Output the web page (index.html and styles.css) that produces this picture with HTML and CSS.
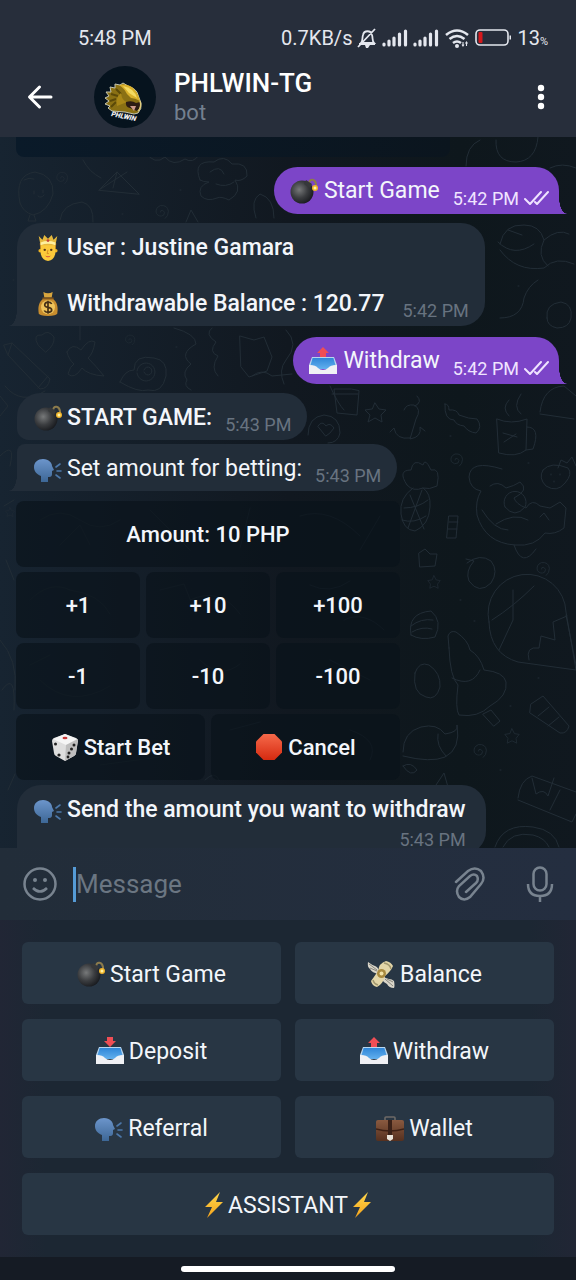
FILE: index.html
```html
<!DOCTYPE html>
<html lang="en">
<head>
<meta charset="utf-8">
<meta name="viewport" content="width=device-width, initial-scale=1">
<title>PHLWIN-TG</title>
<link rel="stylesheet" href="styles.css">
</head>
<body>
<svg class="sprites" aria-hidden="true">
  <defs>
    <radialGradient id="g-bomb" cx=".38" cy=".4" r=".65"><stop offset="0" stop-color="#77797a"/><stop offset=".55" stop-color="#3b3d40"/><stop offset="1" stop-color="#191b1f"/></radialGradient>
    <linearGradient id="g-tray" x1="0" y1="0" x2="0" y2="1"><stop offset="0" stop-color="#2f86d8"/><stop offset="1" stop-color="#62b0ee"/></linearGradient>
    <linearGradient id="g-head" x1="0" y1="0" x2="0" y2="1"><stop offset="0" stop-color="#6c95cb"/><stop offset="1" stop-color="#3d6796"/></linearGradient>
    <linearGradient id="g-stop" x1="0" y1="0" x2="0" y2="1"><stop offset="0" stop-color="#f5694a"/><stop offset="1" stop-color="#d62a10"/></linearGradient>
    <linearGradient id="g-case" x1="0" y1="0" x2="0" y2="1"><stop offset="0" stop-color="#8a5a40"/><stop offset="1" stop-color="#55301f"/></linearGradient>
    <linearGradient id="g-bolt" x1="0" y1="0" x2="0" y2="1"><stop offset="0" stop-color="#ffd84d"/><stop offset="1" stop-color="#f5a31a"/></linearGradient>
  </defs>
  <symbol id="bomb" viewBox="0 0 28 28">
    <path d="M19 6c1-5 6-4 7 1v3" fill="none" stroke="#8c7b4c" stroke-width="2"/>
    <circle cx="12" cy="15" r="11.500" fill="url(#g-bomb)"/>
    <path d="M16 3l6 4-2 4-6-4z" fill="#36383a"/>
    <circle cx="25" cy="11" r="3" fill="#f0b429"/><circle cx="25" cy="11" r="1.500" fill="#fff3a5"/>
  </symbol>
  <symbol id="tray-out" viewBox="0 0 28 28">
    <path d="M14 0l6 6h-3v4h-6V6H8z" fill="#ef4e55"/>
    <path d="M3 10h22l3 8v3H0v-3z" fill="#b9d6ee"/><path d="M3.600 11h20.800l2 7q-5 1-7 4h-10.800q-2-3-7-4z" fill="url(#g-tray)"/>
    <path d="M0 18q7 0 9 3 2 2 5 2t5-2q2-3 9-3v9H0z" fill="#f0f1f5"/>
  </symbol>
  <symbol id="tray-in" viewBox="0 0 28 28">
    <path d="M11 0h6v4h3l-6 6-6-6h3z" fill="#ef4e55"/>
    <path d="M3 10h22l3 8v3H0v-3z" fill="#b9d6ee"/><path d="M3.600 11h20.800l2 7q-5 1-7 4h-10.800q-2-3-7-4z" fill="url(#g-tray)"/>
    <path d="M0 18q7 0 9 3 2 2 5 2t5-2q2-3 9-3v9H0z" fill="#f0f1f5"/>
  </symbol>
  <symbol id="speak" viewBox="0 0 28 28">
    <path d="M7 27v-6C2 19 0 16 0 12 0 7 4 4 9 4c6 0 9 4 9 7l2 4-2 1v3c0 3-2 3-4 3v5z" fill="url(#g-head)"/>
    <path d="M22 12l4-3M23 16h4M22 20l4 3" stroke="#4c78aa" stroke-width="1.600" stroke-linecap="round"/>
  </symbol>
  <symbol id="prince" viewBox="0 0 28 28">
    <path d="M5 9q9-6 18 0l-1 9H6z" fill="#8f5a1a"/><circle cx="5.500" cy="17" r="1.800" fill="#f0b424"/><circle cx="22.500" cy="17" r="1.800" fill="#f0b424"/>
    <path d="M6 11q8-4 16 0v8q-1 8-8 9-7-1-8-9z" fill="#fcc93a"/>
    <path d="M4 1l4 4 2-5 4 4 4-4 2 5 4-4-2 10H6z" fill="#e6b93d"/><path d="M6 8q8-3 16 0v3q-8-3-16 0z" fill="#fff0a0"/>
    <circle cx="14" cy="6" r="1.500" fill="#c64338"/><circle cx="10.500" cy="16" r="1.300" fill="#5b3a16"/><circle cx="17.500" cy="16" r="1.300" fill="#5b3a16"/>
    <path d="M14 16l-1 4h2" fill="none" stroke="#d58b20"/><path d="M11 22q3 2 6 0-1 2-3 2t-3-2z" fill="#d34b3b"/>
  </symbol>
  <symbol id="moneybag" viewBox="0 0 28 28">
    <path d="M9 1q5 3 10 0l-1 6h-8z" fill="#d9a63e"/><path d="M9 8h10c5 4 6 9 5 16q-1 3-10 3T4 24C3 17 4 12 9 8z" fill="#c88d2e"/>
    <path d="M8 7h12v2H8z" fill="#81541b"/><circle cx="14" cy="17.500" r="7.500" fill="#efc45b"/>
    <path d="M18 14q-1-2-4-2-3 0-3.500 2.500T14 17.500q4 .5 4 3T14 23q-3 0-4-2M14 10.500v14" fill="none" stroke="#463016" stroke-width="1.800"/>
  </symbol>
  <symbol id="dice" viewBox="0 0 28 28">
    <path d="M14 1l11 4q2 1 2 3l-2 12q0 2-2 3l-9 5-9-5q-2-1-2-3L1 8q0-2 2-3z" fill="#dedede"/>
    <path d="M14 1l12 5-11 6L2 6z" fill="#f5f5f5"/><path d="M15 12l12-6-2 14q0 2-2 3l-9 5z" fill="#bebebe"/>
    <ellipse cx="14" cy="5" rx="2.500" ry="1.300" fill="#c83a3a"/>
    <g fill="#222"><circle cx="4.500" cy="11" r="1.500"/><circle cx="8" cy="22" r="1.600"/><circle cx="23" cy="12" r="1.500"/><circle cx="20.500" cy="16" r="1.500"/><circle cx="18" cy="20" r="1.500"/><circle cx="17" cy="24" r="1.400"/></g>
  </symbol>
  <symbol id="stop" viewBox="0 0 28 28"><path d="M8.500 1h11L27 8.500v11L19.500 27h-11L1 19.500v-11z" fill="url(#g-stop)"/></symbol>
  <symbol id="cash" viewBox="0 0 28 28">
    <path d="M12 11Q11 7 8 6T1 2q-1 5 2 7 2 4 9 5zM16 16q3 3 6 3t5 2q1 5 0 7-5 0-7-4-4-2-6-6z" fill="#d9d5c9"/>
    <path d="M2 4l8 6M3 8l7 3M26 26l-8-7M26 22l-6-3" stroke="#87857b"/>
    <path d="M11 11q1-8 8-10 5 1 7 5-2 5-8 10-2 8-8 11-5-1-6-6 3-4 7-10z" fill="#e3d6a8"/>
    <path d="M6 20q1 4 5 5M17 3q6 1 7 6" stroke="#a1976e" stroke-width="1.500" fill="none"/>
    <circle cx="14.500" cy="13.500" r="4.500" fill="#a98a3f"/><circle cx="14.500" cy="13.500" r="2" fill="#f2e2a7"/>
  </symbol>
  <symbol id="case" viewBox="0 0 28 28">
    <path d="M9 6V4q0-1 1-1h8q1 0 1 1v2" fill="none" stroke="#6d6a67" stroke-width="1.600"/>
    <rect x="0" y="6" width="28" height="21" rx="2" fill="url(#g-case)"/><path d="M0 15q14 4 28 0" fill="none" stroke="#3f2115" stroke-width="1.500"/>
    <path d="M12 6h4v15h-4z" fill="#3a2118"/><path d="M11 21h6v4l-3 2-3-2z" fill="#e9e4db"/>
  </symbol>
  <symbol id="bolt" viewBox="0 0 22 28"><path d="M17 1L2 16h7L4 27 20 11h-7z" fill="url(#g-bolt)"/></symbol>
  <symbol id="signal" viewBox="0 0 26 18"><path d="M2 15v1M7 12v4M12 9v7M17.500 5v11M23.500 2v14" fill="none" stroke="#e4e7ee" stroke-width="3.200" stroke-linecap="round"/></symbol>
  <symbol id="ticks" viewBox="0 0 25 16"><path d="M1 9l5 5L17 2M11 12l2 2L24 2" fill="none" stroke="#efe3ff" stroke-width="2" stroke-linecap="round" stroke-linejoin="round"/></symbol>
  <symbol id="curl" viewBox="0 0 20 20"><path d="M8 10q0-3 3-2 4 2 1 6-5 3-9-2-2-7 5-10 9-1 10 7 0 6-4 9"/></symbol>
  <symbol id="star" viewBox="0 0 20 20"><path d="M10 1l3 6 6 1-4 5 1 6-6-3-6 3 1-6-4-5 6-1z"/></symbol>
</svg>

<div class="app">
  <header class="top">
    <div class="status">
      <span>5:48 PM</span>
      <div class="status-right">
        <span>0.7KB/s</span>
        <svg class="bell" viewBox="0 0 20 20" aria-label="Silent"><path d="M4 15c2-2 1-5 2-8 1-5 8-5 9 0 1 3 0 6 2 8zM2 16h16M1 19L18 1" fill="none" stroke="#e4e7ee" stroke-width="1.800"/><path d="M8 17h5l-2 3H9z" fill="#e4e7ee"/></svg>
        <svg class="signal" aria-hidden="true"><use href="#signal"/></svg>
        <svg class="signal" aria-hidden="true"><use href="#signal"/></svg>
        <svg class="wifi" viewBox="0 0 26 20" aria-label="Wi-Fi"><path d="M2 7q11-9 22 0M5.500 11q7.500-6 15 0M9 15q4-3 8 0" fill="none" stroke="#e4e7ee" stroke-width="2.600"/><circle cx="13" cy="18" r="2" fill="#e4e7ee"/><path d="M19 14v4M18 16.500l1 1.500 1-1.500M22.500 18v-4M21.500 15.500l1-1.500 1 1.500" fill="none" stroke="#e4e7ee" stroke-width="1.100"/></svg>
        <svg class="battery" viewBox="0 0 37 18" aria-label="Battery"><rect x="1" y="1" width="32" height="15" rx="4" fill="none" stroke="#e4e7ee" stroke-width="1.600"/><path d="M34.500 6.500h1.500v4h-1.500z" fill="#e4e7ee"/><rect x="3.500" y="3" width="4" height="11" rx="1" fill="#d6191c"/></svg>
        <span class="level">13<small>%</small></span>
      </div>
    </div>
    <div class="bar">
      <button class="icon-btn" type="button" aria-label="Back"><svg class="back" viewBox="0 0 26 26"><path d="M24 13H3M12.500 3L2.500 13l10 10" fill="none" stroke="#fff" stroke-width="3" stroke-linecap="round" stroke-linejoin="round"/></svg></button>
      <svg class="avatar" viewBox="0 0 62 62" aria-label="PHLWIN-TG avatar">
        <circle cx="31" cy="31" r="31" fill="#06131e"/>
        <path d="M18 45l-4-3 2-2-5-2 4-3-4-3 4-2-3-4 5 0-1-5 5 1 0-4 5 1 3-2 5 3q9 3 10 9l3 8q1 6-3 10l-4 1-9-2z" fill="#8a7014" stroke="#c4c4b0"/>
        <path d="M17 41l5-5M16 35l6-2M17 28l7 2M22 23l5 5" stroke="#5b4909" stroke-width="2"/>
        <path d="M23 40q-2-8 4-13 1 8 6 9" fill="#a98718"/>
        <path d="M25 19q16-3 21 16-5-3-9-3l-4-4q-3-6-8-9z" fill="#d9b02b"/><path d="M29 20q11 2 14 12-5-3-8-5z" fill="#f4da62"/>
        <path d="M32 36q6-2 10 1l4-1q1 6-3 9l-7-3q-5-1-4-6z" fill="#2d1c14"/><path d="M36 40l6 0-2 5z" fill="#cf9c8e"/><path d="M46 35q2 6-2 10" fill="none" stroke="#e0cc7a" stroke-width="1.300"/>
        <text class="avatar-name" x="17" y="50" transform="rotate(12 17 50)">PHLWIN</text>
      </svg>
      <div class="who"><h1>PHLWIN-TG</h1><p>bot</p></div>
      <button class="icon-btn" type="button" aria-label="More options"><svg class="more" viewBox="0 0 8 26"><g fill="#fff"><circle cx="4" cy="4" r="3.200"/><circle cx="4" cy="13" r="3.200"/><circle cx="4" cy="22" r="3.200"/></g></svg></button>
    </div>
  </header>

  <main class="chat">
    <svg class="wallpaper" viewBox="0 137 576 711" preserveAspectRatio="xMidYMid slice" aria-hidden="true">
      <path d="M20 203q-6-28 15-31 19 3 18 22-5 18-20 21-10-3-13-12zM30 215l-2 6h8l-2-6M34 191v3M43 190v3M38 196q3 3 6-1M24 180q5-3 10-1M99 190l18-18 22 22zM99 190l28-18M117 172l-4 16M83 160q6 12 18 18"/>
      <path d="M60 220q2-16 22-18 12 3 11 20M145 152q10 14 20 5 8 10 20 2 8 5 14-4M200 180q-8-20 14-18 10-8 18 2 16-2 15 12-6 6-12 4 8 12-6 20-8-4-12-2-10 4-16-2-4-10 8-14-6 0-9-2zM210 172q10-8 14 2M216 184q10 4 18-2M256 218q-6-18 4-24 14 4 14 24M186 222l5-12 7 12M466 166q0-20 14-26M496 140q-1 22 20 22 20-1 22-25M550 168q12-6 26 0"/>
      <path d="M500 244q4-20 24-19 16 0 20 15 14-12 25-6M500 250q16 22 44 18 12-12 30-4M498 242q16 16 36 2M508 230l14 5M544 240q-8 16 4 26M500 318q22 0 24-20 4-12 14-18M547 318q-2-14 14-16 12 2 10 16-2 10-14 10-10-2-10-10zM4 345l8-2 38 36q-2 10-10 10L8 355zM12 343l-4 12M38 388l10-12M38 345q-6-11 4-10 6-6 12 2 1 8-8 15zM67 352q5-10 14-2 8-12 14-8-2 12-7 16 8 8 16 18-16-1-22-8-8 12-14 6 2-8 6-10-5-4-7-12zM80 326v14"/>
      <path d="M120 382q5-12 14-12 0-16 20-12 14 2 12 18-4 18-18 14-10 3-28-8zM137 371a9 9 0 1 1 0 2M144 370a4 4 0 1 1 0 2M174 328q22 6 22 16-18 10-5 20-10 8-4 16-4 6 4 10M212 328q-8 6 4 14-8 10 2 14-8 12 0 20M240 336l14 4 10-3 8 20-5 14-18 6-8-10zM252 376q10-8 20 0l20-2M5 386q16 20 40 5M0 396l8 10-8 10"/>
      <path d="M286 330q14 14 0 30-8 10-2 24M330 386q8 18 14 24M351 389h-17l3 24 20 2 2-24zM332 394h26M375 403l4 6 7 1-5 5 1 7-7-4-7 4 2-7-5-5 7-1zM308 435q0-18 16-20 16 1 16 18-2 10-12 10M318 426q4-6 8 0 4-4 8 2-4 6-8 8zM404 410q2-6 10-5 8 4 2 14l-6 20q12-2 10-12l5 4M410 438q-14 2-16-10l-4 4M415 406q8-4 2-10"/>
      <path d="M445 404q4 0 4 6 8-1 10 5 10 4 18 4 6 8-1 14-8-1-12-7-8-1-10-6-10 0-9-16zM497 419q14 6 30 0l-1 31q-10 8-27 3zM503 433l14 4M504 442l12-8M527 427q14 0 6 22l-7 1M509 416q-8-8 0-16M521 414q-9-7 0-20M540 412q3-25 24-26l12 10M540 414l34 5"/>
      <path d="M407 485q-10-15 4-15 2-12 12-5 2-8 8 5 10-3 6 16-8 4-14 2-10 4-16-3zM413 488q-14 10-12 26 2 16 14 17 14-6 15-24 1-14-7-19M404 508q14 0 24-8M402 520q12 4 24-4M410 495l14 34M422 490l-14 38M502 469q-32-10-33 8 1 12 12 14-6 10-4 24 8 28 38 30 20 2 30-12 10 2 19-5l2-20-6-6-10 6-10-2q-8-8-14 2-10-4-12-10 16-8 6-16-6 4-14 6-8-8-16-2M505 507a11 11 0 1 1 20 0q-10 12-20 0M482 510q12 20 26 20M496 524q18-12 32-4M514 545q8 24 22 4M540 517l4-4 5 7"/>
      <path d="M543 470q8-9 25-2 5 6-3 15-8 10-19 3-8-8-3-16zM558 468l3-8 6 3 5-6 4 9M551 474v1M560 474v1M554 481v1M449 516h9l-2 22h-9zM449 522h9M448 529h9M419 553l6-4 5 5 7 0-2 12-15 1zM467 563q13-10 24-2 8 10 0 22-12 12-22-2-4-10 5-20l-8-2M489 622a39 39 0 1 1 77 -10l10 58-58-8q-28-8-29-40zM513 590v30l-14 30M534 586q-20 20-42 34M566 615l10 50M529 660q-4-14 10-12l2-12 14 4-2-18 14-6"/>
      <path d="M411 635q-4-22 20-24 12 10 4 26-14 4-24-2zM411 626q10-8 22-6M412 632q10-6 20-3M449 648l-1-12q2-6 8-4 12 8 14 18 10 6 14 20 20 2 22 12 2 14-16 24-12 12-31 9-4-6-1-30-8-8-9-37zM452 678q20 10 28-8M483 714l8-4 9 11-6 5zM415 673q4-12 14-8 12 8 11 22-4 14-14 10-14-4-11-24zM403 752q0-20 18-25 16-4 24 7 14-2 12-9 4 24-12 32-14 6-42-1M438 734q-2 12 8 22M531 704l12-8 26 30q-2 8-9 7l-30-20zM538 716l11-9M548 726l11-9"/>
      <path d="M518 798q2-18 14-22l44 16M518 800l54 22 4-8M532 778l4 16q8-6 12 2l6-18M560 790l-10 20M495 847q8-24 38-20 22 3 26 20M503 847q8-16 30-12 12 3 16 12M0 456q16-16 10 10M4 506l10-6M6 560l8 20M0 640q18 20 15 50M2 690q14-20 12 20M8 790l7-16"/>
      <path class="faint" d="M40 520q20-14 40 0t40 0M60 545l20-20 10 20M150 510q20 20 40 40M250 508l-10 40M300 516q30-10 60 20M360 550l20-34M30 600q20-20 40-10M70 590q30 4 40 24M30 665l20-10M160 590l24-6 12 30M190 600q30-14 50 14M310 585q20 10 40-4M344 620q20-10 40 10M200 660q20 20 40 4M330 660l40 20M40 680q30 30 70 6M230 730l30-8M350 730q30 10 20 30M100 765l60-8M205 780q10-10 14 0"/>
      <use href="#curl" x="55" y="171" width="14" height="14"/><use href="#curl" x="154" y="204" width="16" height="16"/><use href="#curl" x="124" y="334" width="12" height="12"/><use href="#curl" x="449" y="450" width="15" height="20"/><use href="#curl" x="535" y="561" width="16" height="16"/><use href="#curl" x="472" y="742" width="16" height="18"/><use href="#star" x="427" y="575" width="14" height="14"/><use href="#star" x="504" y="728" width="16" height="16"/><use href="#star" x="5" y="506" width="10" height="12"/>
      <path d="M180 190h1M122 214h1M176 347h1M518 286h1M450 436h1M528 463h1M460 600h1M474 621h1M510 706h1M538 678h1M500 770h1M13 280h1M403 766q8-5 14 4-6 8-14-4M436 785l8-12 4 14"/>
    </svg>

    <div class="thread">
      <div class="previous-button"></div>
      <article class="bubble out"><svg class="emoji" aria-label="bomb"><use href="#bomb"/></svg><span class="text">Start Game</span><time>5:42 PM</time><svg class="ticks" aria-label="Read"><use href="#ticks"/></svg></article>

      <article class="bubble in tail multi strong">
        <div class="lines">
          <p class="line"><svg class="emoji small" aria-label="prince"><use href="#prince"/></svg><span>User : Justine Gamara</span></p>
          <p class="line"><svg class="emoji small" aria-label="money bag"><use href="#moneybag"/></svg><span>Withdrawable Balance : 120.77</span></p>
        </div>
        <time>5:42 PM</time>
      </article>

      <article class="bubble out"><svg class="emoji" aria-label="outbox"><use href="#tray-out"/></svg><span class="text">Withdraw</span><time>5:42 PM</time><svg class="ticks" aria-label="Read"><use href="#ticks"/></svg></article>
      <article class="bubble in strong"><svg class="emoji" aria-label="bomb"><use href="#bomb"/></svg><span class="text">START GAME:</span><time>5:43 PM</time></article>
      <article class="bubble in tail joined"><svg class="emoji" aria-label="speaking head"><use href="#speak"/></svg><span class="text">Set amount for betting:</span><time>5:43 PM</time></article>

      <div class="inline-keys">
        <button class="full" type="button">Amount: 10 PHP</button>
        <button type="button">+1</button><button type="button">+10</button><button type="button">+100</button>
        <button type="button">-1</button><button type="button">-10</button><button type="button">-100</button>
        <button class="half" type="button"><svg class="emoji" aria-hidden="true"><use href="#dice"/></svg>Start Bet</button>
        <button class="half" type="button"><svg class="emoji" aria-hidden="true"><use href="#stop"/></svg>Cancel</button>
      </div>

      <article class="bubble in stacked strong">
        <p class="line"><svg class="emoji" aria-label="speaking head"><use href="#speak"/></svg><span>Send the amount you want to withdraw</span></p>
        <time>5:43 PM</time>
      </article>
    </div>
  </main>

  <form class="composer">
    <button class="icon-btn" type="button" aria-label="Emoji"><svg class="tool" viewBox="0 0 36 36"><circle cx="18" cy="18" r="15.500"/><path d="M11 22q7 7 14 0"/><circle class="dot" cx="13" cy="14" r="2"/><circle class="dot" cx="23" cy="14" r="2"/></svg></button>
    <label class="field"><span class="caret"></span><input type="text" placeholder="Message" aria-label="Message"></label>
    <button class="icon-btn" type="button" aria-label="Attach file"><svg class="tool" viewBox="0 0 36 36"><path d="M4 16L16 5q7-5 13 0 5 7 0 13L18 31q-6 5-11 0-4-6 0-11l11-10q4-3 7 0 2 4-1 7l-10 9" stroke-linecap="round"/></svg></button>
    <button class="icon-btn" type="button" aria-label="Record voice"><svg class="tool" viewBox="0 0 36 36"><rect x="11.500" y="1.500" width="13" height="23" rx="6.500"/><path d="M6 18q0 12 12 12t12-12M18 30v6"/></svg></button>
  </form>

  <section class="reply-keys" aria-label="Bot keyboard">
    <button type="button"><svg class="emoji" aria-hidden="true"><use href="#bomb"/></svg>Start Game</button>
    <button type="button"><svg class="emoji" aria-hidden="true"><use href="#cash"/></svg>Balance</button>
    <button type="button"><svg class="emoji" aria-hidden="true"><use href="#tray-in"/></svg>Deposit</button>
    <button type="button"><svg class="emoji" aria-hidden="true"><use href="#tray-out"/></svg>Withdraw</button>
    <button type="button"><svg class="emoji" aria-hidden="true"><use href="#speak"/></svg>Referral</button>
    <button type="button"><svg class="emoji" aria-hidden="true"><use href="#case"/></svg>Wallet</button>
    <button class="wide" type="button"><svg class="bolt" aria-hidden="true"><use href="#bolt"/></svg>ASSISTANT<svg class="bolt" aria-hidden="true"><use href="#bolt"/></svg></button>
  </section>
  <footer class="nav"><span class="handle"></span></footer>
</div>
</body>
</html>
```

FILE: styles.css
```css
* { box-sizing: border-box; }
body {
  margin: 0;
  background: #151b24;
  color: #f3f6fb;
  font-family: Roboto, "Noto Sans", sans-serif;
  font-size: 23px;
}
h1, p { margin: 0; font-weight: 400; }
button, input { font: inherit; color: inherit; border: 0; padding: 0; background: none; }
svg { display: block; flex: none; }
.sprites { position: absolute; width: 0; height: 0; }

.app { display: flex; flex-direction: column; height: 100vh; }

.top { background: #272e3b; }
.status {
  display: flex;
  align-items: center;
  justify-content: space-between;
  padding: 16px 28px 0 78px;
  height: 60px;
  font-size: 20px;
  color: #e4e7ee;
}
.status-right { display: flex; align-items: center; gap: 5px; }
.bell { width: 20px; height: 20px; }
.signal { width: 26px; height: 18px; }
.wifi { width: 26px; height: 20px; }
.battery { width: 37px; height: 18px; }
.level small { font-size: 11px; }
.bar { display: flex; align-items: center; padding: 6px 31px 9px 27px; }
.icon-btn { display: flex; align-items: center; justify-content: center; }
.back { width: 26px; height: 26px; }
.more { width: 8px; height: 26px; }
.avatar { width: 62px; height: 62px; margin: 0 18px 0 41px; }
.avatar-name { font: italic 900 7px Roboto, sans-serif; fill: #f4f4f4; }
.who { flex: 1; padding-top: 2px; line-height: 30px; }
.who h1 { font-size: 26px; line-height: 30px; font-weight: 500; color: #fff; }
.who p { font-size: 22px; color: #74808f; }

.chat {
  position: relative;
  flex: 1;
  min-height: 0;
  overflow: hidden;
  background: linear-gradient(90deg, #172431, #111820 50%, #0e171c 80%, #10181f);
}
.wallpaper {
  position: absolute;
  inset: 0;
  width: 100%;
  height: 100%;
  fill: none;
  stroke: #222d36;
  stroke-width: 1;
  stroke-linecap: round;
}
.faint { opacity: 0.7; }
.thread { position: relative; display: flex; flex-direction: column; align-items: flex-start; padding: 0 17px 0 16px; }
.previous-button { width: 80%; height: 20px; margin-bottom: 10px; border-radius: 0 0 8px 8px; background: linear-gradient(90deg, #0a1a29, #0b151e); }

.bubble { position: relative; display: flex; align-items: flex-end; margin-bottom: 9px; border-radius: 24px; }
.bubble .text { padding-top: 1px; line-height: 46px; }
.bubble .emoji { margin: 0 6px 9px 0; }
.bubble time { margin-left: 13px; font-size: 18px; line-height: 31px; color: #687380; }
.emoji { width: 28px; height: 28px; }
.emoji.small { height: 26px; }
.bubble::after { content: ""; position: absolute; bottom: 0; width: 8px; height: 16px; }

.out { align-self: flex-end; padding: 0 10px 0 16px; border-bottom-right-radius: 0; background: #7c45c8; }
.out::after { left: 100%; background: radial-gradient(ellipse 8px 16px at 100% 0, transparent 96%, #7c45c8 100%); }
.out time { color: #f0e4ff; }
.ticks { width: 25px; height: 16px; margin: 0 0 8px 5px; }

.in { margin-left: 1px; padding: 0 16px 0 17px; background: #222d39; }
.in .text { padding-top: 3px; line-height: 44px; }
.in .emoji { margin: 0 5px 8px 0; }
.in.tail { border-bottom-left-radius: 0; }
.in.tail::after { right: 100%; background: radial-gradient(ellipse 8px 16px at 0 0, transparent 96%, #222d39 100%); }
.in:has(+ .joined) { margin-bottom: 4px; border-bottom-left-radius: 12px; }
.in.joined { border-top-left-radius: 8px; }
.strong { font-weight: 500; }
.strong time { font-weight: 400; }
.multi { padding-top: 11px; margin-bottom: 11px; }
.multi time { margin-left: 18px; }
.lines { display: flex; flex-direction: column; gap: 28px; padding-bottom: 8px; }
.line { display: flex; align-items: center; line-height: 28px; font-weight: inherit; }
.bubble .line .emoji { margin: 0 5px 0 0; }
.stacked { flex-direction: column; padding: 11px 20px 0 17px; border-bottom-left-radius: 0; margin-bottom: 0; }

.inline-keys { display: grid; grid-template-columns: repeat(6, 1fr); gap: 5px 6px; width: 384px; max-width: 100%; margin: 1px 0 5px; }
.inline-keys button {
  grid-column: span 2;
  display: flex;
  align-items: center;
  justify-content: center;
  gap: 5px;
  height: 66px;
  border-radius: 8px;
  background: #09121aa6;
  font-weight: 500;
  font-size: 22px;
}
.inline-keys .full { grid-column: span 6; }
.inline-keys .half { grid-column: span 3; }

.composer { display: flex; align-items: center; height: 72px; padding: 0 18px 0 22px; background: linear-gradient(90deg, #222d39, #242e40); }
.tool { width: 36px; height: 36px; fill: none; stroke: #78838f; stroke-width: 2.5; }
.tool .dot { fill: #78838f; stroke: none; }
.field { display: flex; align-items: center; flex: 1; min-width: 0; margin-left: 15px; font-size: 26px; }
.caret { flex: none; width: 3px; height: 35px; background: #559bd6; }
.field input { flex: 1; min-width: 0; outline: 0; }
.field input::placeholder { color: #6b7682; opacity: 1; }
.composer .icon-btn + .icon-btn { margin-left: 34px; }

.reply-keys { display: grid; grid-template-columns: 1fr 1fr; gap: 15px 14px; padding: 22px; background: linear-gradient(90deg, #212635, #1c2733 8%, #1c2733 92%, #212635); }
.reply-keys button { display: flex; align-items: center; justify-content: center; gap: 5px; height: 62px; padding-top: 2px; border-radius: 6px; background: #283644; }
.reply-keys .wide { grid-column: span 2; gap: 3px; }
.bolt { width: 22px; height: 28px; }
.nav { display: flex; justify-content: center; align-items: center; height: 23px; background: #151b24; }
.handle { width: 37%; height: 6px; border-radius: 3px; background: #fff; }
```
